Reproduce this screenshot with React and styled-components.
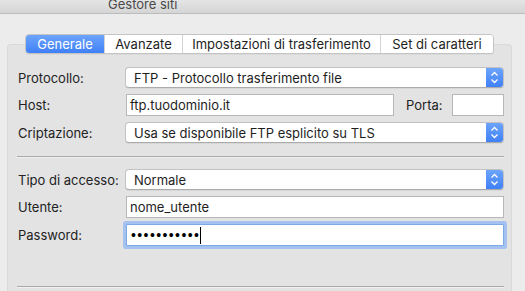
import React from "react"
import styled, { createGlobalStyle } from "styled-components"

const GlobalStyle = createGlobalStyle`
  body {
    margin: 0;
    background: #ececec;
    font-family: Inter, "Liberation Sans", Arial, sans-serif;
    font-size: 13px;
    color: #232323;
  }
`

const Window = styled.div`
  width: 525px;
  height: 291px;
  overflow: hidden;
  display: flex;
  flex-direction: column;
  background: #ececec;
`

const TitleBar = styled.div`
  height: 14px;
  flex: 0 0 14px;
  box-sizing: border-box;
  background: linear-gradient(#e4e4e4, #d5d5d5);
  border-bottom: 1px solid #bcbcbc;
  padding-left: 108px;
  overflow: hidden;
`

const Title = styled.div`
  margin-top: -3px;
  line-height: 14px;
  font-size: 13px;
  color: #4a4a4a;
`

const TabArea = styled.div`
  padding: 20px 13px 0 7px;
  display: flex;
  flex-direction: column;
  flex: 1;
`

const Segmented = styled.div`
  position: relative;
  z-index: 1;
  align-self: flex-start;
  margin-left: 18px;
  margin-bottom: -10px;
  height: 20px;
  display: flex;
  box-sizing: border-box;
  border: 1px solid #c4c4c4;
  border-radius: 4px;
  background: #fff;
  overflow: hidden;
  box-shadow: 0 0.5px 0 rgba(0, 0, 0, 0.08);
`

const Tab = styled.div`
  width: ${(p) => p.$w}px;
  box-sizing: border-box;
  display: flex;
  align-items: center;
  justify-content: center;
  font-size: 13px;
  color: ${(p) => (p.$active ? "#fff" : "#1e1e1e")};
  background: ${(p) =>
    p.$active ? "linear-gradient(#6ca4fb, #3f80f6)" : "#fff"};
  border-left: ${(p) => (p.$first ? "none" : "1px solid #d4d4d4")};
`

const Panel = styled.div`
  flex: 1;
  background: #e3e3e3;
  border: 1px solid #d9d9d9;
  border-bottom: none;
  border-radius: 4px 4px 0 0;
  padding: 22px 7px 0 9px;
`

const Form = styled.div`
  display: grid;
  grid-template-columns: 107px 1fr;
  row-gap: 6px;
  align-items: center;
  padding-left: 1px;
`

const Label = styled.div`
  font-size: 13px;
  color: #222;
  white-space: nowrap;
`

const Select = styled.div`
  height: 21px;
  box-sizing: border-box;
  display: flex;
  align-items: stretch;
  background: #fff;
  border: 1px solid #c2c2c2;
  border-bottom-color: #ababab;
  border-radius: 4px;
  overflow: hidden;
  box-shadow: 0 0.5px 0 rgba(0, 0, 0, 0.1);
`

const SelectText = styled.div`
  flex: 1;
  display: flex;
  align-items: center;
  padding-left: 8px;
  font-size: 13px;
  color: #1e1e1e;
`

const Stepper = styled.div`
  width: 17px;
  display: flex;
  align-items: center;
  justify-content: center;
  background: linear-gradient(#6ca4fb, #3f80f6);
`

const InputRow = styled.div`
  display: flex;
  align-items: center;
  padding-left: 1px;
`

const Input = styled.div`
  height: 22px;
  box-sizing: border-box;
  flex: ${(p) => (p.$w ? `0 0 ${p.$w}px` : "1")};
  display: flex;
  align-items: center;
  padding-left: 3px;
  background: #fff;
  border: 1px solid ${(p) => (p.$focus ? "#7ea8e6" : "#b7b7b7")};
  box-shadow: ${(p) => (p.$focus ? "0 0 0 3px #a4c2f0" : "none")};
  border-radius: ${(p) => (p.$focus ? "1px" : "0")};
  font-size: 13px;
  color: #1e1e1e;
`

const InlineLabel = styled(Label)`
  margin: 0 9px 0 12px;
`

const Dots = styled.span`
  font-family: "Liberation Sans", Arial, sans-serif;
  font-size: 14px;
  letter-spacing: 1.4px;
  color: #000;
  margin-left: 1px;
`

const Caret = styled.span`
  width: 1px;
  height: 17px;
  background: #000;
`

const Separator = styled.div`
  height: 1px;
  margin: ${(p) => p.$m};
  background: #a9a9a9;
  border-bottom: 1px solid #f0f0f0;
`

const Chevrons = () => (
  <svg width="9" height="13" viewBox="0 0 9 13">
    <path
      d="M1.5 4.5 L4.5 1.5 L7.5 4.5 M1.5 8.5 L4.5 11.5 L7.5 8.5"
      stroke="#fff"
      strokeWidth="1.3"
      fill="none"
    />
  </svg>
)

const PopUp = ({ children }) => (
  <Select>
    <SelectText>{children}</SelectText>
    <Stepper>
      <Chevrons />
    </Stepper>
  </Select>
)

export default function App() {
  return (
    <Window>
      <GlobalStyle />
      <TitleBar>
        <Title>Gestore siti</Title>
      </TitleBar>
      <TabArea>
        <Segmented>
          <Tab $w={78} $first $active>
            Generale
          </Tab>
          <Tab $w={78}>Avanzate</Tab>
          <Tab $w={198}>Impostazioni di trasferimento</Tab>
          <Tab $w={113}>Set di caratteri</Tab>
        </Segmented>
        <Panel>
          <Form>
            <Label>Protocollo:</Label>
            <PopUp>FTP - Protocollo trasferimento file</PopUp>
            <Label>Host:</Label>
            <InputRow>
              <Input $w={268}>ftp.tuodominio.it</Input>
              <InlineLabel>Porta:</InlineLabel>
              <Input />
            </InputRow>
            <Label>Criptazione:</Label>
            <PopUp>Usa se disponibile FTP esplicito su TLS</PopUp>
          </Form>
          <Separator $m="13px 0 11px 0" />
          <Form>
            <Label>Tipo di accesso:</Label>
            <PopUp>Normale</PopUp>
            <Label>Utente:</Label>
            <InputRow>
              <Input>nome_utente</Input>
            </InputRow>
            <Label>Password:</Label>
            <InputRow>
              <Input $focus>
                <Dots>•••••••••••</Dots>
                <Caret />
              </Input>
            </InputRow>
          </Form>
          <Separator $m="40px 0 0 0" />
        </Panel>
      </TabArea>
    </Window>
  )
}
